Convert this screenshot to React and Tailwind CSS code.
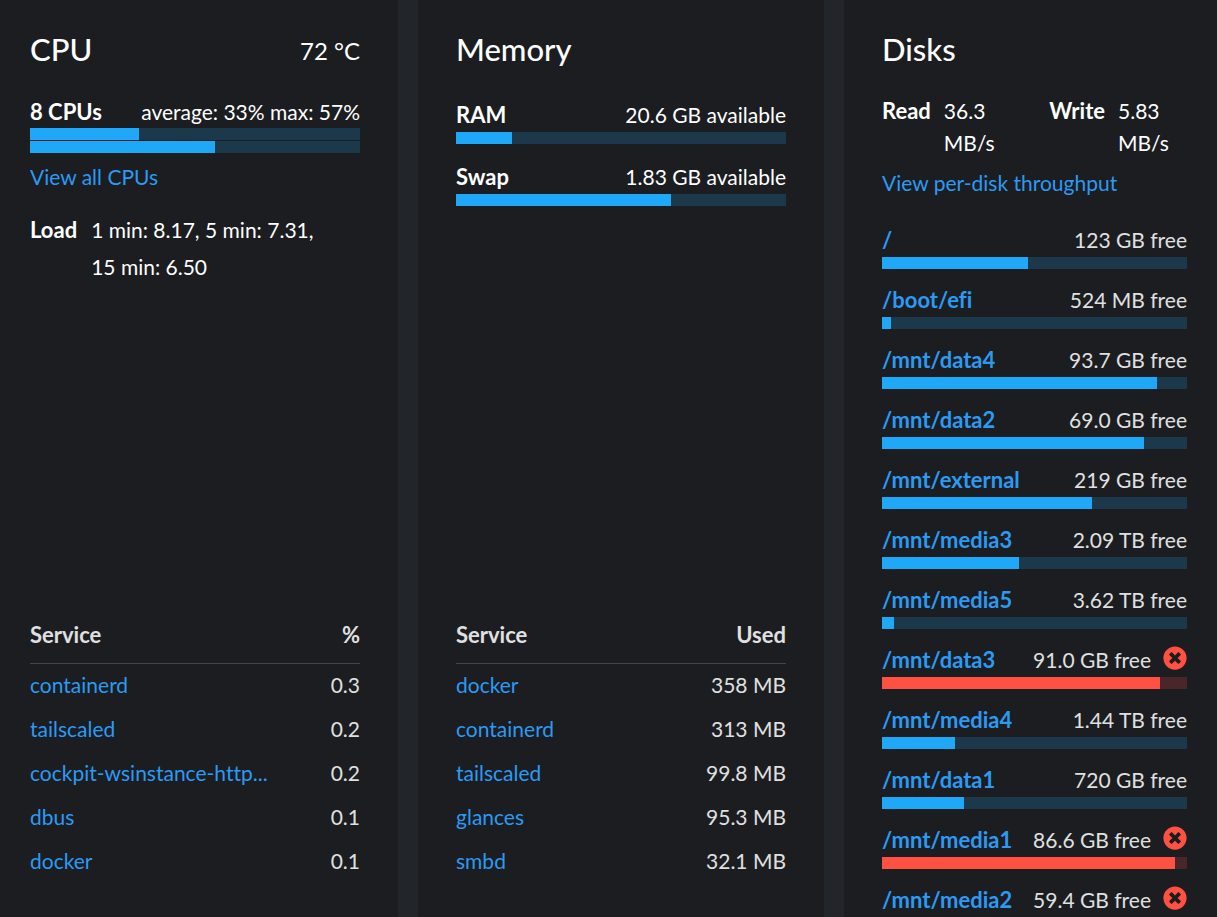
import React from 'react';
import clsx from 'clsx';
import { FaTimesCircle } from 'react-icons/fa';

const cpuServices = [
  { name: 'containerd', value: '0.3' },
  { name: 'tailscaled', value: '0.2' },
  { name: 'cockpit-wsinstance-http...', value: '0.2' },
  { name: 'dbus', value: '0.1' },
  { name: 'docker', value: '0.1' },
];

const memoryServices = [
  { name: 'docker', value: '358 MB' },
  { name: 'containerd', value: '313 MB' },
  { name: 'tailscaled', value: '99.8 MB' },
  { name: 'glances', value: '95.3 MB' },
  { name: 'smbd', value: '32.1 MB' },
];

const disks = [
  { path: '/', free: '123 GB', used: 48 },
  { path: '/boot/efi', free: '524 MB', used: 3 },
  { path: '/mnt/data4', free: '93.7 GB', used: 90 },
  { path: '/mnt/data2', free: '69.0 GB', used: 86 },
  { path: '/mnt/external', free: '219 GB', used: 69 },
  { path: '/mnt/media3', free: '2.09 TB', used: 45 },
  { path: '/mnt/media5', free: '3.62 TB', used: 4 },
  { path: '/mnt/data3', free: '91.0 GB', used: 91, danger: true },
  { path: '/mnt/media4', free: '1.44 TB', used: 24 },
  { path: '/mnt/data1', free: '720 GB', used: 27 },
  { path: '/mnt/media1', free: '86.6 GB', used: 96, danger: true },
  { path: '/mnt/media2', free: '59.4 GB', used: 97, danger: true },
];

function Bar({ value, danger = false, label }) {
  return (
    <div
      role="progressbar"
      aria-label={label}
      aria-valuenow={value}
      aria-valuemin={0}
      aria-valuemax={100}
      className={clsx('h-3 w-full', danger ? 'bg-[#4b2628]' : 'bg-[#1c384b]')}
    >
      <div className={clsx('h-full', danger ? 'bg-[#fe5142]' : 'bg-[#1fa7f8]')} style={{ width: `${value}%` }} />
    </div>
  );
}

function Card({ title, aside, className, children }) {
  return (
    <section className={clsx('flex min-w-0 flex-col bg-[#1b1d21] pt-[27px]', className)}>
      <header className="flex h-11 items-center justify-between">
        <h2 className="text-[31px] leading-[44px] font-medium">{title}</h2>
        {aside && <span className="pt-1 text-2xl">{aside}</span>}
      </header>
      {children}
    </section>
  );
}

function ServiceTable({ unit, rows }) {
  return (
    <table className="mt-auto mb-[46px] w-full table-fixed text-[#e0e0e0]">
      <thead className="text-[22px]">
        <tr className="h-14 border-b border-[#444548]">
          <th scope="col" className="w-3/4 text-left font-bold">Service</th>
          <th scope="col" className="text-right font-bold">{unit}</th>
        </tr>
      </thead>
      <tbody>
        {rows.map((row) => (
          <tr key={row.name} className="h-11">
            <td className="truncate">
              <a href="#" className="text-[#2b9af3] hover:underline">{row.name}</a>
            </td>
            <td className="text-right whitespace-nowrap">{row.value}</td>
          </tr>
        ))}
      </tbody>
    </table>
  );
}

function MemoryRow({ label, available, used }) {
  return (
    <div>
      <div className="mb-px flex h-8 items-baseline justify-between">
        <span className="text-[22px] font-bold">{label}</span>
        <span>{available} available</span>
      </div>
      <Bar value={used} label={label} />
    </div>
  );
}

function DiskRow({ path, free, used, danger }) {
  return (
    <li>
      <div className="mb-0.5 flex h-[30px] items-center">
        <div className="flex flex-1 items-baseline justify-between">
          <a href="#" className="text-[22px] font-bold text-[#2b9af3] hover:underline">{path}</a>
          <span className="text-[#e0e0e0]">{free} free</span>
        </div>
        {danger && <FaTimesCircle className="mb-1 ml-3 size-6 text-[#fe5142]" aria-label="Almost full" />}
      </div>
      <Bar value={used} danger={danger} label={path} />
    </li>
  );
}

export default function App() {
  return (
    <main className="grid h-screen grid-cols-[398fr_406fr_373fr] gap-5 overflow-hidden bg-[#22262a] font-['Lato',sans-serif] text-[21px] leading-8 text-white [font-variant-ligatures:none]">
      <Card title="CPU" aside="72 °C" className="pr-[38px] pl-[30px]">
        <div className="mt-[25px] flex h-8 items-baseline justify-between">
          <span className="text-[22px] font-bold">8 CPUs</span>
          <span>average: 33% max: 57%</span>
        </div>
        <div className="flex flex-col gap-px">
          <Bar value={33} label="Average CPU usage" />
          <Bar value={56} label="Maximum CPU usage" />
        </div>
        <a href="#" className="mt-2 self-start text-[#2b9af3] hover:underline">View all CPUs</a>
        <dl className="mt-[18px] flex items-baseline gap-[14px] leading-[37px]">
          <dt className="text-[22px] font-bold">Load</dt>
          <dd>
            <span className="whitespace-nowrap">1 min: 8.17,</span>{' '}
            <span className="whitespace-nowrap">5 min: 7.31,</span>{' '}
            <span className="whitespace-nowrap">15 min: 6.50</span>
          </dd>
        </dl>
        <ServiceTable unit="%" rows={cpuServices} />
      </Card>

      <Card title="Memory" className="px-[38px]">
        <div className="mt-7 flex flex-col gap-[17px]">
          <MemoryRow label="RAM" available="20.6 GB" used={17} />
          <MemoryRow label="Swap" available="1.83 GB" used={65} />
        </div>
        <ServiceTable unit="Used" rows={memoryServices} />
      </Card>

      <Card title="Disks" className="pr-[30px] pl-[38px]">
        <dl className="mt-6 grid grid-cols-[auto_1fr_auto_auto] items-baseline gap-x-[13px]">
          <dt className="text-[22px] font-bold">Read</dt>
          <dd className="w-14">36.3 MB/s</dd>
          <dt className="text-[22px] font-bold">Write</dt>
          <dd className="w-[69px]">5.83 MB/s</dd>
        </dl>
        <a href="#" className="mt-2 self-start text-[#2b9af3] hover:underline">View per-disk throughput</a>
        <ul className="mt-[26px] flex flex-col gap-4">
          {disks.map((disk) => (
            <DiskRow key={disk.path} {...disk} />
          ))}
        </ul>
      </Card>
    </main>
  );
}
